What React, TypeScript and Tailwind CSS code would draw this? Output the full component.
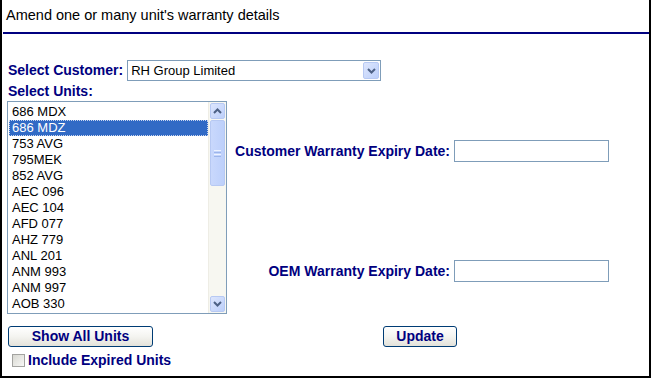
import React from 'react'

const units = [
  '686 MDX',
  '686 MDZ',
  '753 AVG',
  '795MEK',
  '852 AVG',
  'AEC 096',
  'AEC 104',
  'AFD 077',
  'AHZ 779',
  'ANL 201',
  'ANM 993',
  'ANM 997',
  'AOB 330',
]

function Chevron({ up }: { up?: boolean }) {
  return (
    <svg width="9" height="6" viewBox="0 0 9 6">
      <polyline
        points={up ? '1,5 4.5,1.5 8,5' : '1,1 4.5,4.5 8,1'}
        fill="none"
        stroke="#4d6185"
        strokeWidth={2}
      />
    </svg>
  )
}

function ScrollButton({ up }: { up?: boolean }) {
  return (
    <div className="h-[16px] mx-[1px] my-[1px] flex items-center justify-center rounded-[2px] border border-[#b7c9f3] bg-linear-to-br from-[#dde6fd] to-[#bccffa]">
      <Chevron up={up} />
    </div>
  )
}

function UnitList() {
  return (
    <div className="w-[220px] h-[213px] border border-[#7f9db9] bg-white flex overflow-hidden">
      <div className="flex-1 pt-[2px] pl-[1px]">
        {units.map((u, i) => (
          <div
            key={u}
            className={
              i === 1
                ? 'h-[16px] leading-[16px] pl-[3px] bg-[#316ac5] text-white outline outline-1 outline-dotted outline-[#c9d6f0] -outline-offset-1'
                : 'h-[16px] leading-[16px] pl-[3px] text-black'
            }
          >
            {u}
          </div>
        ))}
      </div>
      <div className="w-[18px] bg-[#f7f7f1] border-l border-[#eeede5] flex flex-col">
        <ScrollButton up />
        <div className="h-[66px] mx-[1px] rounded-[2px] border border-[#b7c9f3] bg-linear-to-r from-[#c9d8fc] to-[#bdd0fb] flex flex-col items-center justify-center gap-[1px]">
          <div className="w-[7px] h-[1px] bg-[#eef3fe]" />
          <div className="w-[7px] h-[1px] bg-[#9db5ea]" />
          <div className="w-[7px] h-[1px] bg-[#eef3fe]" />
          <div className="w-[7px] h-[1px] bg-[#9db5ea]" />
        </div>
        <div className="flex-1" />
        <ScrollButton />
      </div>
    </div>
  )
}

function XpButton({ label, className }: { label: string; className: string }) {
  return (
    <button
      className={`h-[21px] rounded-[3px] border border-[#003c74] bg-linear-to-b from-white via-[#f4f4f0] to-[#e3e2da] text-[14px] font-bold text-[#000080] leading-[19px] ${className}`}
    >
      {label}
    </button>
  )
}

function DateRow({ label }: { label: string }) {
  return (
    <div className="w-[382px] h-[22px] flex items-center justify-end">
      <span className="text-[14px] font-bold text-[#000080]">{label}</span>
      <div className="ml-[4px] w-[155px] h-[22px] border border-[#7f9db9] bg-white" />
    </div>
  )
}

export default function App() {
  return (
    <div className="w-[651px] h-[378px] bg-white border-l-2 border-r-2 border-b-2 border-black font-['Liberation_Sans',Arial,sans-serif] flex flex-col">
      <div className="h-[32px] pl-[4px] pt-[6px] text-[14.5px] leading-[18px] text-black">
        Amend one or many unit's warranty details
      </div>
      <div className="h-[2px] ml-[1px] bg-[#000080]" />

      <div className="mt-[26px] h-[21px] pl-[6px] flex items-center">
        <span className="text-[14px] font-bold text-[#000080]">Select Customer:</span>
        <div className="ml-[4px] w-[254px] h-[21px] border border-[#7f9db9] bg-white flex items-center">
          <span className="flex-1 pl-[3px] text-[13px] text-black">RH Group Limited</span>
          <div className="w-[16px] h-[17px] mr-[1px] flex items-center justify-center rounded-[2px] border border-[#b7c9f3] bg-linear-to-br from-[#dde6fd] to-[#bccffa]">
            <Chevron />
          </div>
        </div>
      </div>

      <div className="h-[20px] leading-[20px] pl-[6px] text-[14px] font-bold text-[#000080]">
        Select Units:
      </div>

      <div className="flex text-[13px]">
        <div className="ml-[5px]">
          <UnitList />
        </div>
        <div className="flex flex-col">
          <div className="mt-[39px]">
            <DateRow label="Customer Warranty Expiry Date:" />
          </div>
          <div className="mt-[98px]">
            <DateRow label="OEM Warranty Expiry Date:" />
          </div>
        </div>
      </div>

      <div className="mt-[12px] flex">
        <XpButton label="Show All Units" className="ml-[6px] w-[145px]" />
        <XpButton label="Update" className="ml-[230px] w-[74px]" />
      </div>

      <div className="mt-[6px] ml-[10px] h-[14px] flex items-center">
        <div className="w-[13px] h-[13px] border border-[#a3a3a0] bg-linear-to-br from-[#d8d8d2] to-[#f8f8f6]" />
        <span className="ml-[3px] text-[14px] leading-[14px] font-bold text-[#000080]">Include Expired Units</span>
      </div>
    </div>
  )
}
